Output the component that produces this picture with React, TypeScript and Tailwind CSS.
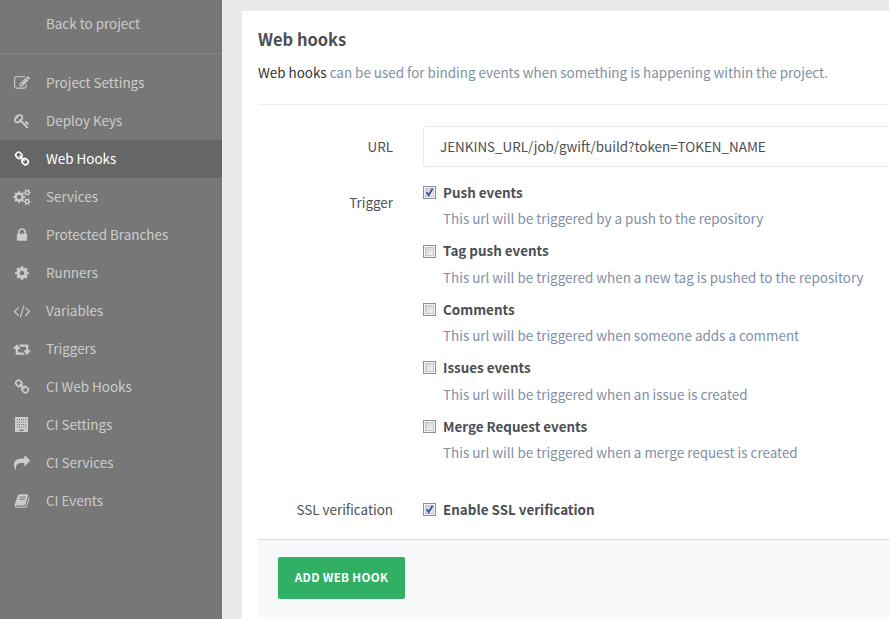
import React from "react";

const PATHS: Record<string, string> = {
  edit: "M888 1184l116-116-152-152-116 116v56h96v96h56zm440-720q-16-16-33 1l-350 350q-17 17-1 33t33-1l350-350q17-17 1-33zm80 594v190q0 119-84.5 203.5t-203.5 84.5h-832q-119 0-203.5-84.5t-84.5-203.5v-832q0-119 84.5-203.5t203.5-84.5h832q63 0 117 25 15 7 18 23 3 17-9 29l-49 49q-14 14-32 8-23-6-45-6h-832q-66 0-113 47t-47 113v832q0 66 47 113t113 47h832q66 0 113-47t47-113v-126q0-13 9-22l64-64q15-15 35-7t20 29zm-96-738l288 288-672 672h-288v-288zm444 132l-92 92-288-288 92-92q28-28 68-28t68 28l152 152q28 28 28 68t-28 68z",
  key: "M832 512q0-80-56-136t-136-56-136 56-56 136q0 42 19 83-41-19-83-19-80 0-136 56t-56 136 56 136 136 56 136-56 56-136q0-42-19-83 41 19 83 19 80 0 136-56t56-136zm851 704q0 17-49 66t-66 49q-9 0-28.5-16t-36.5-33-38.5-40-24.5-26l-96 96 220 220q28 28 28 68 0 42-39 81t-81 39q-40 0-68-28l-671-671q-176 131-365 131-163 0-265.5-102.5t-102.5-265.5q0-160 95-313t248-248 313-95q163 0 265.5 102.5t102.5 265.5q0 189-131 365l355 355 96-96q-3-3-26-24.5t-40-38.5-33-36.5-16-28.5q0-17 49-66t66-49q13 0 23 10 6 6 46 44.5t82 79.5 86.5 86 73 78 28.5 41z",
  link: "M1520 1216q0-40-28-68l-208-208q-28-28-68-28-42 0-72 32 3 3 19 18.5t21.5 21.5 15 19 13 25.5 3.5 27.5q0 40-28 68t-68 28q-15 0-27.5-3.5t-25.5-13-19-15-21.5-21.5-18.5-19q-33 31-33 73 0 40 28 68l206 207q27 27 68 27 40 0 68-26l147-146q28-28 28-67zm-703-705q0-40-28-68l-206-207q-28-28-68-28-39 0-68 27l-147 146q-28 28-28 67 0 40 28 68l208 208q27 27 68 27 42 0 72-31-3-3-19-18.5t-21.5-21.5-15-19-13-25.5-3.5-27.5q0-40 28-68t68-28q15 0 27.5 3.5t25.5 13 19 15 21.5 21.5 18.5 19q33-31 33-73zm895 705q0 120-85 203l-147 146q-83 83-203 83-121 0-204-85l-206-207q-83-83-83-203 0-123 88-209l-88-88q-86 88-208 88-120 0-204-84l-208-208q-84-84-84-204t85-203l147-146q83-83 203-83 121 0 204 85l206 207q83 83 83 203 0 123-88 209l88 88q86-88 208-88 120 0 204 84l208 208q84 84 84 204z",
  gears: "M832 896q0-106-75-181t-181-75-181 75-75 181 75 181 181 75 181-75 75-181zm768 512q0-52-38-90t-90-38-90 38-38 90q0 53 37.5 90.5t90.5 37.5 90.5-37.5 37.5-90.5zm0-1024q0-52-38-90t-90-38-90 38-38 90q0 53 37.5 90.5t90.5 37.5 90.5-37.5 37.5-90.5zm-384 421v185q0 10-7 19.5t-16 10.5l-155 24q-11 35-32 76 34 48 90 115 7 11 7 20 0 12-7 19-23 30-82.5 89.5t-78.5 59.5q-11 0-21-7l-115-90q-37 19-77 31-11 108-23 155-7 24-30 24h-186q-11 0-20-7.5t-10-17.5l-23-153q-34-10-75-31l-118 89q-7 7-20 7-11 0-21-8-144-133-144-160 0-9 7-19 10-14 41-53t47-61q-23-44-35-82l-152-24q-10-1-17-9.5t-7-19.5v-185q0-10 7-19.5t16-10.5l155-24q11-35 32-76-34-48-90-115-7-11-7-20 0-12 7-20 22-30 82-89t79-59q11 0 21 7l115 90q34-18 77-32 11-108 23-154 7-24 30-24h186q11 0 20 7.5t10 17.5l23 153q34 10 75 31l118-89q8-7 20-7 11 0 21 8 144 133 144 160 0 8-7 19-12 16-42 54t-45 60q23 48 34 82l152 23q10 2 17 10.5t7 19.5zm640 533v140q0 16-149 31-12 27-30 52 51 113 51 138 0 4-4 7-122 71-124 71-8 0-46-47t-52-68q-20 2-30 2t-30-2q-14 21-52 68t-46 47q-2 0-124-71-4-3-4-7 0-25 51-138-18-25-30-52-149-15-149-31v-140q0-16 149-31 13-29 30-52-51-113-51-138 0-4 4-7 4-2 35-20t59-34 30-16q8 0 46 46.5t52 67.5q20-2 30-2t30 2q51-71 92-112l6-2q4 0 124 70 4 3 4 7 0 25-51 138 17 23 30 52 149 15 149 31zm0-1024v140q0 16-149 31-12 27-30 52 51 113 51 138 0 4-4 7-122 71-124 71-8 0-46-47t-52-68q-20 2-30 2t-30-2q-14 21-52 68t-46 47q-2 0-124-71-4-3-4-7 0-25 51-138-18-25-30-52-149-15-149-31v-140q0-16 149-31 13-29 30-52-51-113-51-138 0-4 4-7 4-2 35-20t59-34 30-16q8 0 46 46.5t52 67.5q20-2 30-2t30 2q51-71 92-112l6-2q4 0 124 70 4 3 4 7 0 25-51 138 17 23 30 52 149 15 149 31z",
  lock: "M640 768h512v-192q0-106-75-181t-181-75-181 75-75 181v192zm832 96v576q0 40-28 68t-68 28h-960q-40 0-68-28t-28-68v-576q0-40 28-68t68-28h32v-192q0-184 132-316t316-132 316 132 132 316v192h32q40 0 68 28t28 68z",
  gear: "M1152 896q0-106-75-181t-181-75-181 75-75 181 75 181 181 75 181-75 75-181zm512-109v222q0 12-8 23t-20 13l-185 28q-19 54-39 91 35 50 107 138 10 12 10 25t-9 23q-27 37-99 108t-94 71q-12 0-26-9l-138-108q-44 23-91 38-16 136-29 186-7 28-36 28h-222q-14 0-24.5-8.5t-11.5-21.5l-28-184q-49-16-90-37l-141 107q-10 9-25 9-14 0-25-11-126-114-165-168-7-10-7-23 0-12 8-23 15-21 51-66.5t54-70.5q-27-50-41-99l-183-27q-13-2-21-12.5t-8-23.5v-222q0-12 8-23t19-13l186-28q14-46 39-92-40-57-107-138-10-12-10-24 0-10 9-23 26-36 98.5-107.5t94.5-71.5q13 0 26 10l138 107q44-23 91-38 16-136 29-186 7-28 36-28h222q14 0 24.5 8.5t11.5 21.5l28 184q49 16 90 37l142-107q9-9 24-9 13 0 25 10 129 119 165 170 7 8 7 22 0 12-8 23-15 21-51 66.5t-54 70.5q26 50 41 98l183 28q13 2 21 12.5t8 23.5z",
  code: "M553 1399l-50 50q-10 10-23 10t-23-10l-466-466q-10-10-10-23t10-23l466-466q10-10 23-10t23 10l50 50q10 10 10 23t-10 23l-393 393 393 393q10 10 10 23t-10 23zm591-1067l-373 1291q-4 13-15.5 19.5t-23.5 2.5l-62-17q-13-4-19.5-15.5t-2.5-24.5l373-1291q4-13 15.5-19.5t23.5-2.5l62 17q13 4 19.5 15.5t2.5 24.5zm657 651l-466 466q-10 10-23 10t-23-10l-50-50q-10-10-10-23t10-23l393-393-393-393q-10-10-10-23t10-23l50-50q10-10 23-10t23 10l466 466q10 10 10 23t-10 23z",
  retweet: "M1216 1504q0 13-9.5 22.5t-22.5 9.5h-960q-8 0-13.5-2t-9-7-5.5-8-3-11.5-1-11.5v-600h-192q-26 0-45-19t-19-45q0-24 15-41l320-384q19-22 49-22t49 22l320 384q15 17 15 41 0 26-19 45t-45 19h-192v384h576q16 0 25 11l160 192q7 10 7 21zm640-416q0 24-15 41l-320 384q-20 23-49 23t-49-23l-320-384q-15-17-15-41 0-26 19-45t45-19h192v-384h-576q-16 0-25-12l-160-192q-7-9-7-20 0-13 9.5-22.5t22.5-9.5h960q8 0 13.5 2t9 7 5.5 8 3 11.5 1 11.5v600h192q26 0 45 19t19 45z",
  share: "M1792 640q0 26-19 45l-512 512q-19 19-45 19t-45-19-19-45v-256h-224q-98 0-175.5 6t-154 21.5-133 42.5-105.5 69.5-80 101-48.5 138.5-17.5 181q0 55 5 123 0 6 2.5 23.5t2.5 26.5q0 15-8.5 25t-23.5 10q-16 0-28-17-7-9-13-22t-13.5-30-10.5-24q-127-285-127-451 0-199 53-333 162-403 875-403h224v-256q0-26 19-45t45-19 45 19l512 512q19 19 19 45z",
  book: "M1703 478q40 57 18 129l-275 906q-19 64-76.5 107.5t-122.5 43.5h-923q-77 0-148.5-53.5t-99.5-131.5q-24-67-2-127 0-4 3-27t4-37q1-8-3-21.5t-3-19.5q2-11 8-21t16.5-23.5 16.5-23.5q23-38 45-91.5t30-91.5q3-10 .5-30t-.5-28q3-11 17-28t17-23q21-36 42-92t25-90q1-9-2.5-32t.5-28q4-13 22-30.5t22-22.5q19-26 42.5-84.5t27.5-96.5q1-8-3-25.5t-2-26.5q2-8 9-18t18-23 17-21q8-12 16.5-30.5t15-35 16-36 19.5-32 26.5-23.5 36-11.5 47.5 5.5l-1 3q38-9 51-9h761q74 0 114 56t18 130l-274 906q-36 119-71.5 153.5t-128.5 34.5h-869q-27 0-38 15-11 16-1 43 24 70 144 70h923q29 0 56-15.5t35-41.5l300-987q7-22 5-57 38 15 59 43zm-1064 2q-4 13 2 22.5t20 9.5h608q13 0 25.5-9.5t16.5-22.5l21-64q4-13-2-22.5t-20-9.5h-608q-13 0-25.5 9.5t-16.5 22.5zm-83 256q-4 13 2 22.5t20 9.5h608q13 0 25.5-9.5t16.5-22.5l21-64q4-13-2-22.5t-20-9.5h-608q-13 0-25.5 9.5t-16.5 22.5z",
};

function Icon({ name }: { name: string }) {
  if (name === "building") {
    return (
      <svg className="block h-4 w-4 shrink-0 overflow-visible" viewBox="0 0 16 16" fill="currentColor">
        <path
          fillRule="evenodd"
          d="M1 0H14V15H1ZM3 2V3H4V2ZM5 2V3H6V2ZM7 2V3H8V2ZM9 2V3H10V2ZM11 2V3H12V2ZM3 4.5V5.5H4V4.5ZM5 4.5V5.5H6V4.5ZM7 4.5V5.5H8V4.5ZM9 4.5V5.5H10V4.5ZM11 4.5V5.5H12V4.5ZM3 7V8H4V7ZM5 7V8H6V7ZM7 7V8H8V7ZM9 7V8H10V7ZM11 7V8H12V7ZM3 9.5V10.5H4V9.5ZM5 9.5V10.5H6V9.5ZM7 9.5V10.5H8V9.5ZM9 9.5V10.5H10V9.5ZM11 9.5V10.5H12V9.5ZM5.5 12.5V14H9.5V12.5Z"
        />
      </svg>
    );
  }
  return (
    <svg className="block h-4 w-4 shrink-0 overflow-visible" viewBox="0 0 1792 1792" fill="currentColor">
      <path d={PATHS[name]} />
    </svg>
  );
}

const NAV = [
  { icon: "edit", label: "Project Settings" },
  { icon: "key", label: "Deploy Keys" },
  { icon: "link", label: "Web Hooks", active: true },
  { icon: "gears", label: "Services" },
  { icon: "lock", label: "Protected Branches" },
  { icon: "gear", label: "Runners" },
  { icon: "code", label: "Variables" },
  { icon: "retweet", label: "Triggers" },
  { icon: "link", label: "CI Web Hooks" },
  { icon: "building", label: "CI Settings" },
  { icon: "share", label: "CI Services" },
  { icon: "book", label: "CI Events" },
];

const TRIGGERS = [
  { label: "Push events", hint: "This url will be triggered by a push to the repository", on: true },
  { label: "Tag push events", hint: "This url will be triggered when a new tag is pushed to the repository" },
  { label: "Comments", hint: "This url will be triggered when someone adds a comment" },
  { label: "Issues events", hint: "This url will be triggered when an issue is created" },
  { label: "Merge Request events", hint: "This url will be triggered when a merge request is created" },
];

function Checkbox({ on }: { on?: boolean }) {
  return (
    <span className="mt-[1.6px] block h-[13px] w-[13px] shrink-0 border border-[#8e8f8f] bg-[#f4f4f4] p-px">
      <span className="block h-[9px] w-[9px] border border-[#c3c7cc] bg-linear-to-br from-[#cdd1d7] to-[#f6f6f6]">
        {on && (
          <svg className="block h-[7px] w-[7px] overflow-visible" viewBox="0 0 7 7" fill="none">
            <path d="M0.6 3.2L2.7 6.2L6.6 -0.4" stroke="#40539a" strokeWidth="1.9" />
          </svg>
        )}
      </span>
    </span>
  );
}

export default function App() {
  return (
    <div className="flex h-[619px] w-[889px] overflow-hidden bg-[#e9eaec] font-['Noto_Sans_CJK_SC','Noto_Sans',sans-serif] text-[13.43px] leading-[20px] text-[#4c4e54]">
      <aside className="flex w-[222px] shrink-0 flex-col bg-[#777777] text-[#cccccc]">
        <div className="h-[54px] border-b border-[#888888] pt-[13px] pl-[46px]">Back to project</div>
        <nav className="pt-[10px]">
          {NAV.map((n) => (
            <div
              key={n.label}
              className={n.active ? "flex h-[38px] items-center gap-4 bg-[#666666] pl-[14px] text-white" : "flex h-[38px] items-center gap-4 pl-[14px]"}
            >
              <Icon name={n.icon} />
              <span className="pb-[2px]">{n.label}</span>
            </div>
          ))}
        </nav>
      </aside>
      <main className="mt-[11px] ml-5 w-[700px] shrink-0 bg-white pl-4">
        <h3 className="pt-[17px] text-[16.45px] leading-[22px] font-bold">Web hooks</h3>
        <p className="mt-3 text-[#7f8fa4]">
          <span className="text-[#333333]">Web hooks</span> can be used for binding events when something is happening within the project.
        </p>
        <div className="mt-[22px] h-px bg-[#eeeeee]" />
        <div className="mt-[21px] flex">
          <label className="w-[135px] pt-[10px] text-right">URL</label>
          <div className="ml-[30px] h-[41px] w-[500px] rounded-[2px] border border-[#e7e9ed] pt-[9px] pl-4">
            JENKINS_URL/job/gwift/build?token=TOKEN_NAME
          </div>
        </div>
        <div className="flex pt-[15px]">
          <label className="w-[135px] pt-[10px] text-right">Trigger</label>
          <div className="ml-[30px]">
            {TRIGGERS.map((t) => (
              <div key={t.label} className="h-[58.4px]">
                <div className="flex h-5 items-center gap-[7px] font-bold">
                  <Checkbox on={t.on} />
                  {t.label}
                </div>
                <p className="mt-[6.4px] pl-5 text-[#7f8fa4]">{t.hint}</p>
              </div>
            ))}
          </div>
        </div>
        <div className="flex pt-[25px]">
          <label className="w-[135px] text-right">SSL verification</label>
          <div className="ml-[30px] flex items-center gap-[7px] font-bold">
            <Checkbox on />
            Enable SSL verification
          </div>
        </div>
        <div className="mt-[20px] h-[78px] border-t border-[#d8dce2] bg-[#f7f8fa] pt-[17px] pl-5">
          <button className="block h-[42px] w-[127px] rounded-[2px] bg-[#31af64] pb-px text-[11.64px] font-bold tracking-[0.3px] text-white">ADD WEB HOOK</button>
        </div>
      </main>
    </div>
  );
}
